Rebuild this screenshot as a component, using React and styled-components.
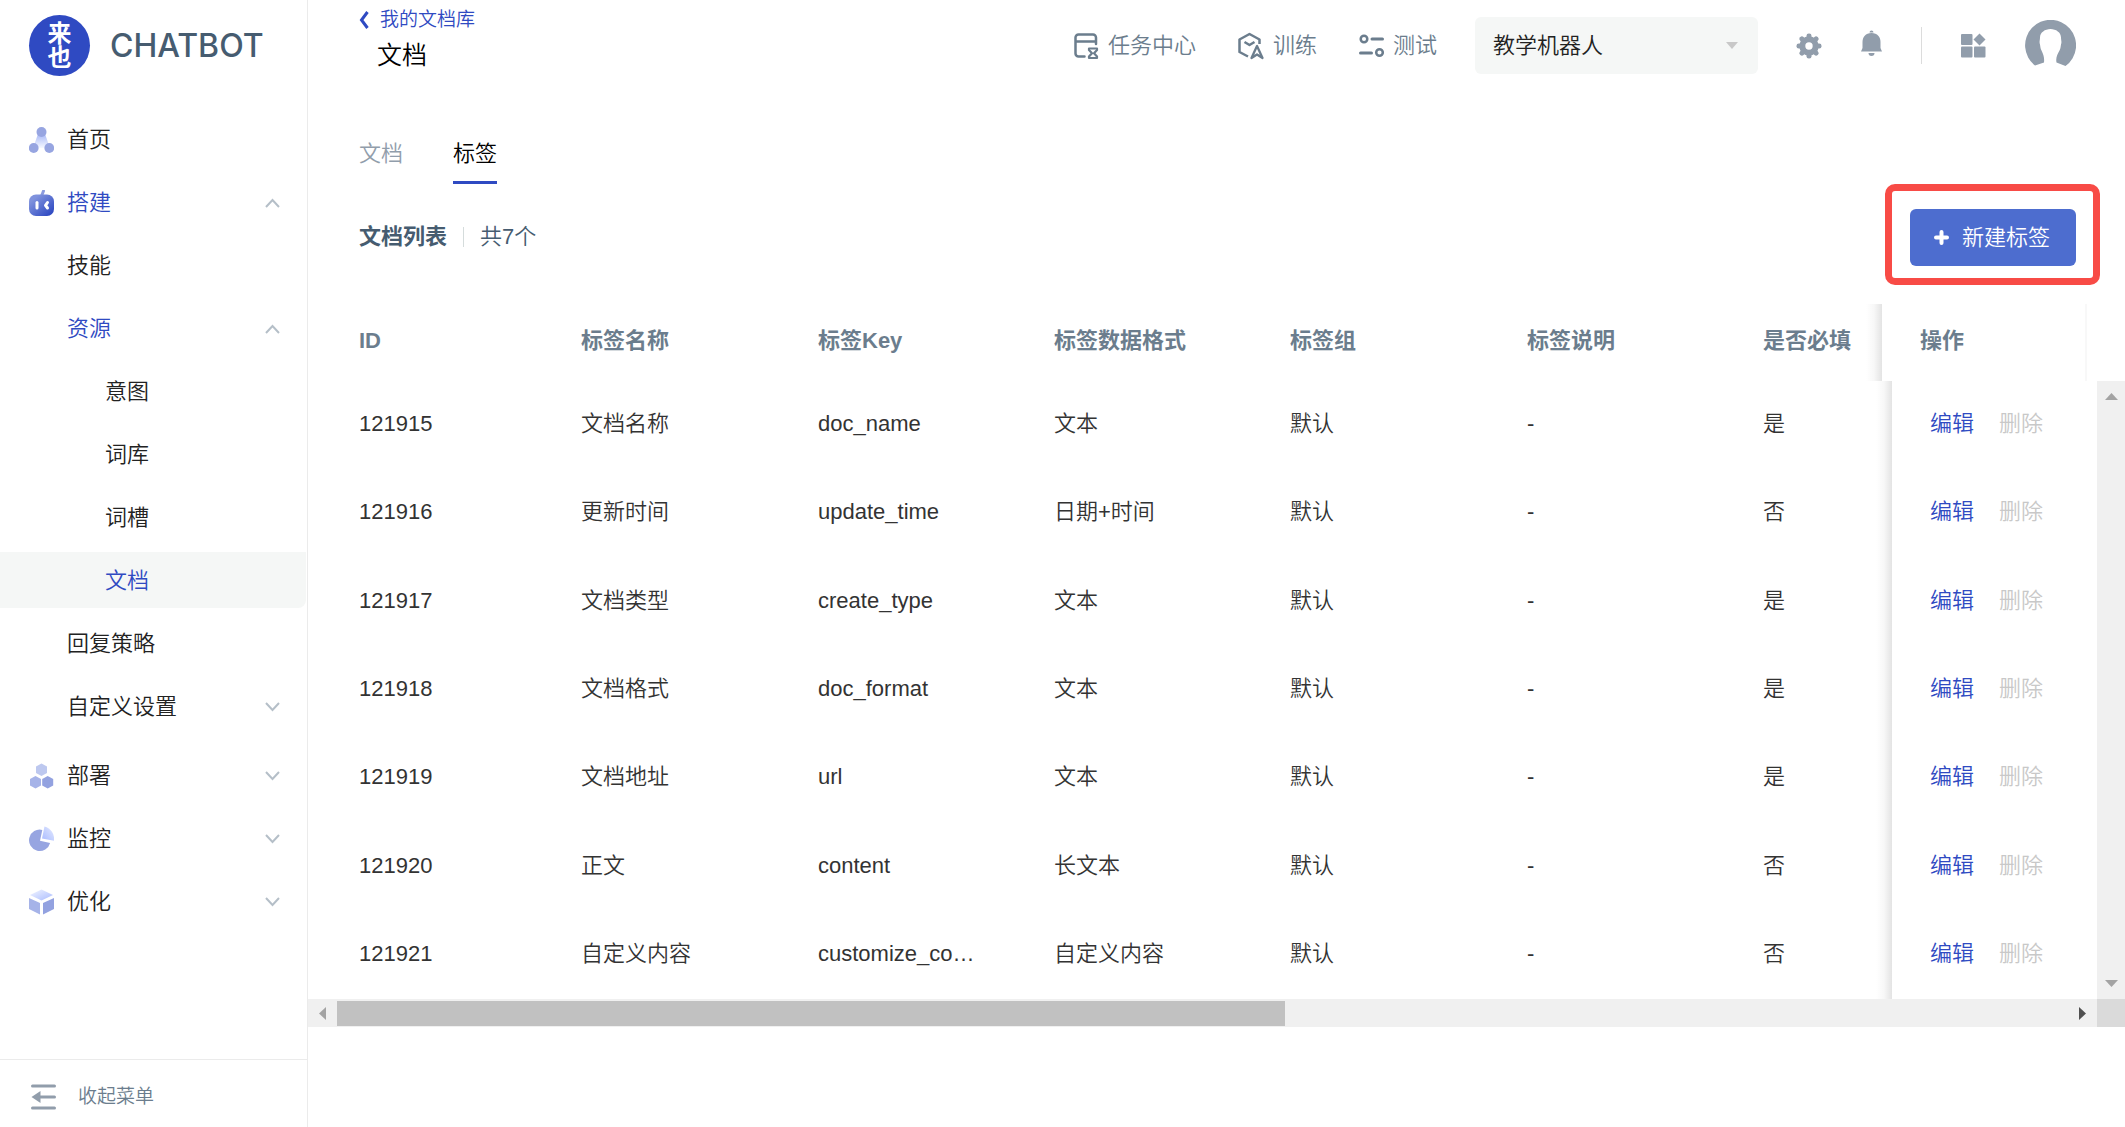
import React from 'react';
import styled, { createGlobalStyle } from 'styled-components';

const GlobalStyle = createGlobalStyle`
  * {
    box-sizing: border-box;
  }
  body {
    margin: 0;
    background: #fff;
    color: #333;
    font-family: "Liberation Sans", "Noto Sans CJK SC", sans-serif;
    font-size: 22px;
    font-weight: 350;
    line-height: 32px;
  }
  button, select {
    margin: 0;
    padding: 0;
    border: 0;
    background: none;
    color: inherit;
    font: inherit;
    cursor: pointer;
  }
  a {
    color: inherit;
    text-decoration: none;
  }
  svg {
    display: block;
    flex: none;
  }
`

const Page = styled.div`
  display: flex;
  min-height: 100vh;
`

/* sidebar */

const Sidebar = styled.aside`
  display: flex;
  flex-direction: column;
  flex: none;
  width: 308px;
  border-right: 1px solid #ebebeb;
`
const Brand = styled.div`
  display: flex;
  align-items: center;
  gap: 20px;
  height: 91px;
  padding-left: 29px;
`
const BrandMark = styled.div`
  display: flex;
  flex-direction: column;
  align-items: center;
  justify-content: center;
  width: 61px;
  height: 61px;
  border-radius: 50%;
  background: #2f4ac2;
  color: #fff;
  font-size: 24px;
  font-weight: 700;
  line-height: 24px;
`
const BrandName = styled.span`
  color: #465c70;
  font-family: Inter, "Liberation Sans", sans-serif;
  font-size: 32px;
  font-weight: 500;
`
const Nav = styled.nav`
  display: flex;
  flex-direction: column;
  flex: 1;
  gap: 7px;
  padding: 20px 1px 20px 0;
`
const NavGroup = styled.div`
  display: flex;
  flex-direction: column;
  gap: 7px;
  padding-bottom: 6px;
`
const NavItem = styled.a`
  display: flex;
  align-items: center;
  gap: 13px;
  height: 56px;
  padding-top: 2px;
  padding-right: 26px;
  padding-left: ${props => [29, 67, 105][props.$level || 0]}px;
  border-radius: 0 0 8px 0;
  background: ${props => (props.$selected ? '#f5f7f6' : 'transparent')};
  color: ${props => (props.$active ? '#2f4ac2' : '#222')};
`
const NavText = styled.span`
  flex: 1;
`
const Collapse = styled.button`
  display: flex;
  align-items: center;
  gap: 22px;
  height: 68px;
  padding-top: 6px;
  padding-left: 31px;
  border-top: 1px solid #ebebeb;
  color: #6b7d8d;
  font-size: 19px;
`

/* top bar */

const Main = styled.main`
  flex: 1;
  min-width: 0;
`
const TopBar = styled.header`
  display: flex;
  align-items: center;
  justify-content: space-between;
  height: 91px;
  padding: 0 49px 0 51px;
`
const Crumbs = styled.div`
  display: flex;
  flex-direction: column;
  gap: 3px;
  padding-bottom: 12px;
`
const BackLink = styled.a`
  display: flex;
  align-items: center;
  gap: 11px;
  color: #2f4ac2;
  font-size: 19px;
  line-height: 28px;
`
const PageTitle = styled.h1`
  margin: 0;
  padding-left: 18px;
  color: #000;
  font-size: 25px;
  font-weight: 350;
  line-height: 36px;
`
const Tools = styled.div`
  display: flex;
  align-items: center;
  gap: 38px;
`
const ToolGroup = styled.div`
  display: flex;
  align-items: center;
  gap: ${props => props.$gap}px;
`
const ToolButton = styled.button`
  display: flex;
  align-items: center;
  gap: 9px;
  color: #6b7d8d;
`
const IconButton = styled.button`
  display: flex;
  color: #919dab;
`
const Divider = styled.span`
  width: 1px;
  height: ${props => props.$height}px;
  background: ${props => props.$color};
`
const SelectBox = styled.label`
  display: grid;
  align-items: center;
  width: 283px;
  height: 57px;
  border-radius: 6px;
  background: #f5f7f6;

  > * {
    grid-area: 1 / 1;
  }
  > svg {
    justify-self: end;
    margin-right: 20px;
    pointer-events: none;
  }
`
const RobotSelect = styled.select`
  width: 100%;
  height: 100%;
  padding: 0 44px 0 18px;
  appearance: none;
  color: #222;
`

/* content */

const Tabs = styled.div`
  display: flex;
  gap: 50px;
  padding: 45px 51px 0;
`
const Tab = styled.button`
  height: 48px;
  padding-bottom: 9px;
  border-bottom: 3px solid ${props => (props.$active ? '#2f4ac2' : 'transparent')};
  color: ${props => (props.$active ? '#000' : '#919dab')};
`
const Toolbar = styled.div`
  display: flex;
  align-items: center;
  justify-content: space-between;
  padding: 0 25px 0 51px;
`
const Summary = styled.div`
  display: flex;
  align-items: center;
  gap: 16px;
  padding-top: 4px;
  color: #465c70;
`
const ListTitle = styled.h2`
  margin: 0;
  font-size: 22px;
  font-weight: 700;
  line-height: 32px;
`
const Highlight = styled.div`
  padding: 18px 17px 12px 18px;
  border: 7px solid #f84b46;
  border-radius: 10px;
`
const CreateButton = styled.button`
  display: flex;
  align-items: center;
  gap: 13px;
  height: 57px;
  padding: 0 26px 0 24px;
  border-radius: 6px;
  background: #4d6dcf;
  color: #fff;
`

/* table */

const TableBox = styled.section`
  margin-top: 19px;
`
const HeadRow = styled.div`
  padding-right: 38px;
`
const BodyRow = styled.div`
  display: flex;
  min-height: 618px;
`
const Table = styled.table`
  flex: 1;
  width: 100%;
  min-width: 0;
  border-collapse: separate;
  border-spacing: 0;
  table-layout: fixed;
`
const Cell = styled.td`
  height: 88px;
  padding: 0 14px 2px;
  overflow: hidden;
  text-align: left;
  text-overflow: ellipsis;
  white-space: nowrap;

  &:first-child {
    padding-left: 51px;
  }
  &:nth-child(3) {
    padding-right: 60px;
  }
`
const HeadCell = styled(Cell)`
  height: 77px;
  padding-bottom: 4px;
  color: #6b7d8d;
  font-weight: 700;
`
const pinned = `
  position: relative;
  overflow: visible;
  padding-left: 38px;
  background: #fff;

  &::before {
    content: "";
    position: absolute;
    top: 0;
    bottom: 0;
    left: -16px;
    width: 16px;
    background: linear-gradient(to right, rgba(0, 0, 0, 0), rgba(0, 0, 0, 0.03) 50%, rgba(0, 0, 0, 0.11));
  }
`
const PinnedHeadCell = styled(HeadCell)`
  ${pinned}
  border-right: 2px solid #f8f8f8;
`
const PinnedCell = styled(Cell)`
  ${pinned}
`
const RowAction = styled.button`
  margin-right: 25px;
  color: ${props => (props.disabled ? '#c8c8c8' : '#2f4ac2')};
`
const ScrollColumn = styled.div`
  display: flex;
  flex-direction: column;
  align-items: center;
  justify-content: space-between;
  flex: none;
  width: 28px;
  padding: 9px 0;
  background: #f0f0f0;
`
const ScrollRow = styled.div`
  display: flex;
  height: 28px;
`
const ScrollTrack = styled.div`
  display: flex;
  align-items: center;
  flex: 1;
  gap: 8px;
  padding: 0 8px;
  background: #f0f0f0;
`
const ScrollSpace = styled.div`
  flex: 45;
`
const ScrollThumb = styled.div`
  flex: 55;
  height: 25px;
  background: #c1c1c1;
`
const ScrollCorner = styled.div`
  width: 28px;
  background: #dadada;
`

/* icons */

const HomeIcon = () => (
  <svg width="25" height="26" viewBox="0 0 25 26">
    <defs>
      <linearGradient id="home" x1="0" y1="0" x2="0" y2="1">
        <stop offset="0" stopColor="#a9b9f7" />
        <stop offset="1" stopColor="#f6f8ff" />
      </linearGradient>
    </defs>
    <path d="M9 7h7l5 14H4z" fill="url(#home)" />
    <circle cx="12.500" cy="5" r="5" fill="#97a5e1" />
    <circle cx="4.700" cy="21" r="4.900" fill="#97a5e1" />
    <circle cx="20.300" cy="21" r="4.900" fill="#97a5e1" />
  </svg>
)
const BuildIcon = () => (
  <svg width="25" height="26" viewBox="0 0 25 26">
    <defs>
      <linearGradient id="build" x1="0" y1="0" x2="1" y2="1">
        <stop offset="0.200" stopColor="#7f92dd" />
        <stop offset="0.900" stopColor="#2f4ac2" />
      </linearGradient>
    </defs>
    <path d="M12.500 6l2-5" stroke="#8b9bdf" strokeWidth="3" strokeLinecap="round" />
    <rect y="4.500" width="25" height="21.500" rx="7" fill="url(#build)" />
    <path d="M8 12.500v5.500" stroke="#fff" strokeWidth="3" strokeLinecap="round" />
    <path d="M18.500 12.500L16.500 15.300l2 2.700" stroke="#fff" strokeWidth="3" strokeLinecap="round" strokeLinejoin="round" fill="none" />
  </svg>
)
const DeployIcon = () => (
  <svg width="25" height="26" viewBox="0 0 25 26">
    <path d="M12.500 0.500l5.500 3v6.500l-5.500 3-5.500-3V3.500z" fill="#bdc8ef" />
    <path d="M6.500 13l5.500 3v6.500l-5.500 3-5.500-3V16z" fill="#a6b3e8" />
    <path d="M18.700 13l5.500 3v6.500l-5.500 3-5.500-3V16z" fill="#93a2e0" />
  </svg>
)
const MonitorIcon = () => (
  <svg width="25" height="26" viewBox="0 0 25 26">
    <defs>
      <linearGradient id="monitor" x1="0" y1="1" x2="1" y2="0">
        <stop offset="0" stopColor="#a9bbff" />
        <stop offset="1" stopColor="#e4eaff" />
      </linearGradient>
    </defs>
    <path d="M13.300 3.900A10.700 10.700 0 1 0 21.100 16.900L11 14.800z" fill="#97a5e1" />
    <path d="M15.500 0.500A13 13 0 0 1 25 14.800L13 12.500z" fill="url(#monitor)" />
  </svg>
)
const OptimizeIcon = () => (
  <svg width="25" height="26" viewBox="0 0 25 26">
    <defs>
      <linearGradient id="optimize" x1="0" y1="0" x2="1" y2="1">
        <stop offset="0.200" stopColor="#e4eaff" />
        <stop offset="1" stopColor="#a9bbff" />
      </linearGradient>
    </defs>
    <path d="M12.500 0.500l11.500 5.500-11.500 5.500L1 6z" fill="url(#optimize)" />
    <path d="M0 9l11 5v11.500L0 20z" fill="#a6b3e8" />
    <path d="M25 9l-11 5v11.500L25 20z" fill="#93a2e0" />
  </svg>
)
const Chevron = ({ up }) => (
  <svg width="15" height="10" viewBox="0 0 15 10" fill="none" stroke="#b5bfc8" strokeWidth="2">
    <path d={up ? 'M1 9l6.500-7L14 9' : 'M1 1l6.500 7L14 1'} />
  </svg>
)
const CollapseIcon = () => (
  <svg width="25" height="26" viewBox="0 0 25 26" fill="none" stroke="#919dab" strokeWidth="3" strokeLinecap="round">
    <path d="M1.500 2h22M8 13h15.500M1.500 24h22" />
    <path d="M0.500 13l9-6v12z" fill="#919dab" stroke="none" />
  </svg>
)
const BackIcon = () => (
  <svg width="10" height="18" viewBox="0 0 10 18" fill="none" stroke="#2f4ac2" strokeWidth="3">
    <path d="M8.500 1L2.500 9l6 8" />
  </svg>
)
const TaskIcon = () => (
  <svg width="25" height="28" viewBox="0 0 25 28" fill="none" stroke="currentColor" strokeWidth="2.500">
    <path d="M10.500 24.500H4.500a3 3 0 0 1-3-3v-16a3 3 0 0 1 3-3h14.500a3 3 0 0 1 3 3V12M1.500 9.500h20.500" strokeLinecap="round" />
    <path d="M15 16.500h8v1.500l-3 3.200 3 3.300v1.500h-8v-1.500l3-3.300-3-3.200z" strokeWidth="2.200" strokeLinejoin="round" />
  </svg>
)
const TrainIcon = () => (
  <svg width="26" height="28" viewBox="0 0 26 28" fill="none" stroke="currentColor" strokeWidth="2.500" strokeLinejoin="round">
    <path d="M10 24.500L1.500 20V7.500L11.500 2l10 5.500V12" />
    <path d="M6.500 10l5 3 5-3" />
    <path d="M19 14l-5.500 12 5.500-3.500 5.500 3.500z" strokeWidth="2.300" />
  </svg>
)
const TestIcon = () => (
  <svg width="25" height="24" viewBox="0 0 25 24" fill="none" stroke="currentColor" strokeWidth="3" strokeLinecap="round">
    <circle cx="5" cy="5" r="3.300" strokeWidth="2.500" />
    <path d="M13 5h10.500M1.500 19h11" />
    <circle cx="20.500" cy="18.500" r="3.300" strokeWidth="2.500" />
  </svg>
)
const CaretIcon = () => (
  <svg width="12" height="7" viewBox="0 0 12 7" fill="#c8c8c8">
    <path d="M0 0h12L6 7z" />
  </svg>
)
const teeth = [0, 45, 90, 135, 180, 225, 270, 315]
const GearIcon = () => (
  <svg width="26" height="26" viewBox="0 0 26 26" fill="currentColor">
    <circle cx="13" cy="13" r="6.700" fill="none" stroke="currentColor" strokeWidth="6" />
    {teeth.map(angle => (
      <rect key={angle} x="10.500" y="0.500" width="5" height="6" rx="2.300" transform={`rotate(${angle} 13 13)`} />
    ))}
  </svg>
)
const BellIcon = () => (
  <svg width="21" height="32" viewBox="0 0 21 32" fill="currentColor">
    <path d="M8.500 2.500a2 2 0 0 1 4 0zM10.500 3c6 0 9 4 9 9v6l1.500 3.500H0L1.500 18v-6c0-5 3-9 9-9zM7.500 23h6a3 3 0 0 1-6 0z" />
  </svg>
)
const AppsIcon = () => (
  <svg width="25" height="25" viewBox="0 0 25 25" fill="currentColor">
    <rect x="0" y="1" width="11.500" height="11" rx="1" />
    <rect x="0" y="13.500" width="11.500" height="11" rx="1" />
    <rect x="13" y="13.500" width="11.500" height="11" rx="1" />
    <path d="M18.500 0.500l6 6-6 6-6-6z" />
  </svg>
)
const AvatarIcon = () => (
  <svg width="51" height="51" viewBox="0 0 51 51">
    <path d="M10 45.500A25.500 25.500 0 1 1 40.500 46L31.500 42.500c-1-5 1-8 3-12 1-2 1-3 1.500-6 1-3 0-4 0-7 0-5-5-8.500-10.500-8.500S15 12.500 15 17.500c0 3-1 4 0 7 0.500 3 0.500 4 1.500 6 2 4 3 7 2.500 12z" fill="#919dab" />
  </svg>
)
const PlusIcon = () => (
  <svg width="15" height="15" viewBox="0 0 15 15" stroke="#fff" strokeWidth="4" strokeLinecap="round">
    <path d="M7.500 2v11M2 7.500h11" />
  </svg>
)
const arrows = {
  up: 'M0 10l6.500-7L13 10z',
  down: 'M0 3l6.500 7L13 3z',
  left: 'M10 0L3 6.500l7 6.500z',
  right: 'M3 0l7 6.500L3 13z',
}
const ScrollArrow = ({ to, color = '#a3a3a3' }) => (
  <svg width="13" height="13" viewBox="0 0 13 13" fill={color}>
    <path d={arrows[to]} />
  </svg>
)

const rows = [
  ['121915', '文档名称', 'doc_name', '文本', '默认', '-', '是'],
  ['121916', '更新时间', 'update_time', '日期+时间', '默认', '-', '否'],
  ['121917', '文档类型', 'create_type', '文本', '默认', '-', '是'],
  ['121918', '文档格式', 'doc_format', '文本', '默认', '-', '是'],
  ['121919', '文档地址', 'url', '文本', '默认', '-', '是'],
  ['121920', '正文', 'content', '长文本', '默认', '-', '否'],
  ['121921', '自定义内容', 'customize_content', '自定义内容', '默认', '-', '否'],
]
const headings = ['ID', '标签名称', '标签Key', '标签数据格式', '标签组', '标签说明', '是否必填']

// the 是否必填 column takes whatever width is left
const Columns = () => (
  <colgroup>
    <col width="259" />
    <col width="237" />
    <col width="236" />
    <col width="236" />
    <col width="237" />
    <col width="236" />
    <col />
    <col width="205" />
  </colgroup>
)

class Menu extends React.Component {
  render() {
    return (
      <Sidebar>
        <Brand>
          <BrandMark>
            <span>来</span>
            <span>也</span>
          </BrandMark>
          <BrandName>CHATBOT</BrandName>
        </Brand>
        <Nav>
          <NavItem href="#"><HomeIcon /><NavText>首页</NavText></NavItem>
          <NavGroup>
            <NavItem href="#" $active><BuildIcon /><NavText>搭建</NavText><Chevron up /></NavItem>
            <NavItem href="#" $level={1}>技能</NavItem>
            <NavItem href="#" $level={1} $active><NavText>资源</NavText><Chevron up /></NavItem>
            <NavItem href="#" $level={2}>意图</NavItem>
            <NavItem href="#" $level={2}>词库</NavItem>
            <NavItem href="#" $level={2}>词槽</NavItem>
            <NavItem href="#" $level={2} $active $selected>文档</NavItem>
            <NavItem href="#" $level={1}>回复策略</NavItem>
            <NavItem href="#" $level={1}><NavText>自定义设置</NavText><Chevron /></NavItem>
          </NavGroup>
          <NavItem href="#"><DeployIcon /><NavText>部署</NavText><Chevron /></NavItem>
          <NavItem href="#"><MonitorIcon /><NavText>监控</NavText><Chevron /></NavItem>
          <NavItem href="#"><OptimizeIcon /><NavText>优化</NavText><Chevron /></NavItem>
        </Nav>
        <Collapse><CollapseIcon />收起菜单</Collapse>
      </Sidebar>
    );
  }
}

class Header extends React.Component {
  render() {
    return (
      <TopBar>
        <Crumbs>
          <BackLink href="#"><BackIcon />我的文档库</BackLink>
          <PageTitle>文档</PageTitle>
        </Crumbs>
        <Tools>
          <ToolGroup $gap={42}>
            <ToolButton><TaskIcon />任务中心</ToolButton>
            <ToolButton><TrainIcon />训练</ToolButton>
            <ToolButton><TestIcon />测试</ToolButton>
          </ToolGroup>
          <SelectBox>
            <RobotSelect aria-label="机器人">
              <option>教学机器人</option>
            </RobotSelect>
            <CaretIcon />
          </SelectBox>
          <ToolGroup $gap={39}>
            <IconButton aria-label="设置"><GearIcon /></IconButton>
            <IconButton aria-label="通知"><BellIcon /></IconButton>
            <Divider $height={37} $color="#dcdcdc" />
            <IconButton aria-label="应用"><AppsIcon /></IconButton>
            <IconButton aria-label="账号"><AvatarIcon /></IconButton>
          </ToolGroup>
        </Tools>
      </TopBar>
    );
  }
}

class TagTable extends React.Component {
  render() {
    return (
      <TableBox>
        <HeadRow>
          <Table>
            <Columns />
            <thead>
              <tr>
                {headings.map(text => <HeadCell as="th" key={text}>{text}</HeadCell>)}
                <PinnedHeadCell as="th">操作</PinnedHeadCell>
              </tr>
            </thead>
          </Table>
        </HeadRow>
        <BodyRow>
          <Table>
            <Columns />
            <tbody>
              {rows.map(row => (
                <tr key={row[0]}>
                  {row.map((text, i) => <Cell key={i}>{text}</Cell>)}
                  <PinnedCell>
                    <RowAction>编辑</RowAction>
                    <RowAction disabled>删除</RowAction>
                  </PinnedCell>
                </tr>
              ))}
            </tbody>
          </Table>
          <ScrollColumn>
            <ScrollArrow to="up" />
            <ScrollArrow to="down" />
          </ScrollColumn>
        </BodyRow>
        <ScrollRow>
          <ScrollTrack>
            <ScrollArrow to="left" />
            <ScrollThumb />
            <ScrollSpace />
            <ScrollArrow to="right" color="#505050" />
          </ScrollTrack>
          <ScrollCorner />
        </ScrollRow>
      </TableBox>
    );
  }
}

class App extends React.Component {
  render() {
    return (
      <Page>
        <GlobalStyle />
        <Menu />
        <Main>
          <Header />
          <Tabs>
            <Tab>文档</Tab>
            <Tab $active>标签</Tab>
          </Tabs>
          <Toolbar>
            <Summary>
              <ListTitle>文档列表</ListTitle>
              <Divider $height={20} $color="#d5dcdc" />
              <span>共7个</span>
            </Summary>
            <Highlight>
              <CreateButton><PlusIcon />新建标签</CreateButton>
            </Highlight>
          </Toolbar>
          <TagTable />
        </Main>
      </Page>
    );
  }
}

export default App
